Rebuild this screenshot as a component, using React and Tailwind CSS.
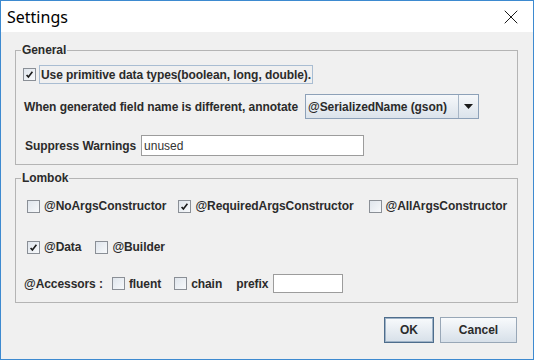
import { X } from 'lucide-react';

const CheckBox = ({ checked }) => (
  <div className="w-[13px] h-[13px] shrink-0 border border-[#8a8f96] bg-gradient-to-br from-[#dfe5ec] to-[#f7f9fb] flex items-center justify-center">
    {checked && (
      <svg width="9" height="9" viewBox="0 0 9 9">
        <path d="M1.6 4.9 L3.4 7 L7.4 1.8" fill="none" stroke="#1a1a1a" strokeWidth="1.6" />
      </svg>
    )}
  </div>
);

const Option = ({ label, checked, className = '' }) => (
  <div className={`flex items-center ${className}`}>
    <CheckBox checked={checked} />
    <span className="ml-[4px] font-bold text-[12px] tracking-[-0.07px] text-[#2b2b2b]">{label}</span>
  </div>
);

const Group = ({ title, className = '', children }) => (
  <fieldset className={`w-[503px] border border-[#b4b4b4] p-0 m-0 ${className}`}>
    <legend className="ml-[5px] px-[1px] text-[12px] leading-[14px] font-bold tracking-[-0.07px] text-[#2b2b2b]">{title}</legend>
    {children}
  </fieldset>
);

export default function App() {
  return (
    <div className="w-[534px] h-[360px] border border-[#3d8ad0] bg-[#f0f0f0] flex flex-col font-['Liberation_Sans',Arial,sans-serif] text-[#2b2b2b]">
      {/* Title bar */}
      <div className="h-[31px] bg-white flex items-center justify-between pl-[6px] pr-[10px] shrink-0">
        <span className="font-['Noto_Sans',sans-serif] text-[16px] text-black">Settings</span>
        <X size={24} strokeWidth={0.9} className="text-black" />
      </div>

      <div className="pl-[14px] pt-[11px] flex flex-col">
        {/* General */}
        <Group title="General">
          <div className="pl-[7px] pb-[8px] flex flex-col">
            <div className="mt-[8px] h-[19px] flex items-center">
              <CheckBox checked />
              <div className="ml-[3px] h-[19px] px-[1px] border border-[#a9bdd2] flex items-center font-bold text-[12px] tracking-[-0.07px]">
                Use primitive data types(boolean, long, double).
              </div>
            </div>
            <div className="mt-[10px] h-[25px] flex items-center pl-[1px]">
              <span className="font-bold text-[12px] tracking-[-0.07px]">When generated field name is different, annotate</span>
              <div className="ml-[7px] w-[174px] h-[25px] border border-[#8da1b8] bg-gradient-to-b from-[#f6f8fa] to-[#dbe3eb] flex">
                <span className="flex-1 flex items-center pl-[2px] font-bold text-[12px] tracking-[-0.07px]">@SerializedName (gson)</span>
                <div className="w-[20px] border-l border-[#a7b6c6] flex items-center justify-center">
                  <svg width="9" height="5" viewBox="0 0 9 5">
                    <path d="M0 0 H9 L4.5 5 Z" fill="#1a1a1a" />
                  </svg>
                </div>
              </div>
            </div>
            <div className="mt-[16px] h-[21px] flex items-center pl-[2px]">
              <span className="font-bold text-[12px] tracking-[-0.07px]">Suppress Warnings</span>
              <div className="ml-[5px] w-[223px] h-[21px] bg-white border border-[#9c9c9c] flex items-center pl-[2px] text-[12px] text-[#333]">
                unused
              </div>
            </div>
          </div>
        </Group>

        {/* Lombok */}
        <Group title="Lombok" className="mt-[6px]">
          <div className="pl-[11px] pb-[9px] flex flex-col">
            <div className="mt-[11px] h-[20px] flex items-center">
              <Option label="@NoArgsConstructor" />
              <Option label="@RequiredArgsConstructor" checked className="ml-[12px]" />
              <Option label="@AllArgsConstructor" className="ml-[15px]" />
            </div>
            <div className="mt-[21px] h-[20px] flex items-center">
              <Option label="@Data" checked />
              <Option label="@Builder" className="ml-[14px]" />
            </div>
            <div className="mt-[17px] h-[19px] flex items-center -ml-[3px]">
              <span className="font-bold text-[12px] tracking-[-0.07px]">@Accessors :</span>
              <Option label="fluent" className="ml-[9px]" />
              <Option label="chain" className="ml-[13px]" />
              <span className="ml-[14px] font-bold text-[12px] tracking-[-0.07px]">prefix</span>
              <div className="ml-[5px] w-[70px] h-[19px] bg-white border border-[#9c9c9c]" />
            </div>
          </div>
        </Group>

        {/* Buttons */}
        <div className="mt-[14px] flex justify-end pr-[16px] gap-[6px]">
          <button className="w-[50px] h-[26px] border border-[#4e6d8c] shadow-[inset_0_0_0_1px_#9fb3c7] bg-gradient-to-b from-[#f8fafc] to-[#d7e0e9] font-bold text-[12px] text-[#2b2b2b]">
            OK
          </button>
          <button className="w-[77px] h-[26px] border border-[#98a7b7] bg-gradient-to-b from-[#f8fafc] to-[#d7e0e9] font-bold text-[12px] text-[#2b2b2b]">
            Cancel
          </button>
        </div>
      </div>
    </div>
  );
}
